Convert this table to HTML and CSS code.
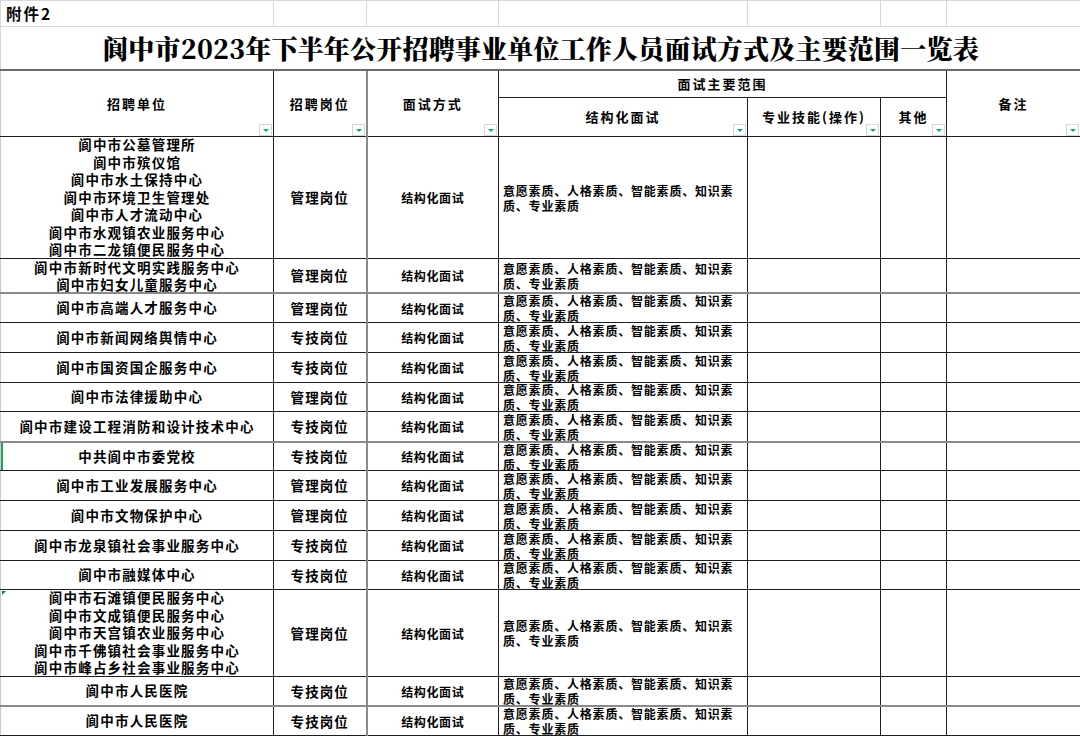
FILE: index.html
```html
<!DOCTYPE html>
<html lang="zh">
<head>
<meta charset="utf-8">
<title>面试方式及主要范围一览表</title>
<link rel="stylesheet" href="styles.css">
</head>
<body>
<table class="sheet">
  <colgroup>
    <col class="c1"><col class="c2"><col class="c3"><col class="c4"><col class="c5"><col class="c6"><col class="c7">
  </colgroup>
  <tr class="r0">
    <td class="att">附件2</td><td></td><td></td><td></td><td></td><td></td><td></td>
  </tr>
  <tr class="rt">
    <td colspan="7" class="title">阆中市2023年下半年公开招聘事业单位工作人员面试方式及主要范围一览表</td>
  </tr>
  <tr class="h1">
    <td rowspan="2" class="hd first">招聘单位<span class="f"></span></td>
    <td rowspan="2" class="hd">招聘岗位<span class="f"></span></td>
    <td rowspan="2" class="hd gl">面试方式<span class="f"></span></td>
    <td colspan="3" class="hd">面试主要范围</td>
    <td rowspan="2" class="hd">备注<span class="f"></span></td>
  </tr>
  <tr class="h2">
    <td class="hd">结构化面试<span class="f"></span></td>
    <td class="hd">专业技能(操作)<span class="f"></span></td>
    <td class="hd">其他<span class="f"></span></td>
  </tr>
  <tr class="d1">
    <td class="unit"><div class="v">阆中市公墓管理所<br>阆中市殡仪馆<br>阆中市水土保持中心<br>阆中市环境卫生管理处<br>阆中市人才流动中心<br>阆中市水观镇农业服务中心<br>阆中市二龙镇便民服务中心</div></td>
    <td class="post">管理岗位</td><td class="way gl">结构化面试</td>
    <td class="scope"><div class="v">意愿素质、人格素质、智能素质、知识素质、专业素质</div></td><td></td><td></td><td></td>
  </tr>
  <tr class="d2">
    <td class="unit"><div class="v">阆中市新时代文明实践服务中心<br>阆中市妇女儿童服务中心</div></td>
    <td class="post">管理岗位</td><td class="way gl">结构化面试</td>
    <td class="scope"><div class="v">意愿素质、人格素质、智能素质、知识素质、专业素质</div></td><td></td><td></td><td></td>
  </tr>
  <tr class="dsg gt">
    <td class="unit">阆中市高端人才服务中心</td>
    <td class="post">管理岗位</td><td class="way gl">结构化面试</td>
    <td class="scope"><div class="v">意愿素质、人格素质、智能素质、知识素质、专业素质</div></td><td></td><td></td><td></td>
  </tr>
  <tr class="ds">
    <td class="unit">阆中市新闻网络舆情中心</td>
    <td class="post">专技岗位</td><td class="way gl">结构化面试</td>
    <td class="scope"><div class="v">意愿素质、人格素质、智能素质、知识素质、专业素质</div></td><td></td><td></td><td></td>
  </tr>
  <tr class="ds">
    <td class="unit">阆中市国资国企服务中心</td>
    <td class="post">专技岗位</td><td class="way gl">结构化面试</td>
    <td class="scope"><div class="v">意愿素质、人格素质、智能素质、知识素质、专业素质</div></td><td></td><td></td><td></td>
  </tr>
  <tr class="dn">
    <td class="unit">阆中市法律援助中心</td>
    <td class="post">管理岗位</td><td class="way gl">结构化面试</td>
    <td class="scope"><div class="v">意愿素质、人格素质、智能素质、知识素质、专业素质</div></td><td></td><td></td><td></td>
  </tr>
  <tr class="ds">
    <td class="unit">阆中市建设工程消防和设计技术中心</td>
    <td class="post">专技岗位</td><td class="way gl">结构化面试</td>
    <td class="scope"><div class="v">意愿素质、人格素质、智能素质、知识素质、专业素质</div></td><td></td><td></td><td></td>
  </tr>
  <tr class="dng gt">
    <td class="unit sel">中共阆中市委党校</td>
    <td class="post">专技岗位</td><td class="way gl">结构化面试</td>
    <td class="scope"><div class="v">意愿素质、人格素质、智能素质、知识素质、专业素质</div></td><td></td><td></td><td></td>
  </tr>
  <tr class="ds">
    <td class="unit">阆中市工业发展服务中心</td>
    <td class="post">管理岗位</td><td class="way gl">结构化面试</td>
    <td class="scope"><div class="v">意愿素质、人格素质、智能素质、知识素质、专业素质</div></td><td></td><td></td><td></td>
  </tr>
  <tr class="ds">
    <td class="unit">阆中市文物保护中心</td>
    <td class="post">管理岗位</td><td class="way gl">结构化面试</td>
    <td class="scope"><div class="v">意愿素质、人格素质、智能素质、知识素质、专业素质</div></td><td></td><td></td><td></td>
  </tr>
  <tr class="ds">
    <td class="unit">阆中市龙泉镇社会事业服务中心</td>
    <td class="post">专技岗位</td><td class="way gl">结构化面试</td>
    <td class="scope"><div class="v">意愿素质、人格素质、智能素质、知识素质、专业素质</div></td><td></td><td></td><td></td>
  </tr>
  <tr class="dn">
    <td class="unit">阆中市融媒体中心</td>
    <td class="post">专技岗位</td><td class="way gl">结构化面试</td>
    <td class="scope"><div class="v">意愿素质、人格素质、智能素质、知识素质、专业素质</div></td><td></td><td></td><td></td>
  </tr>
  <tr class="d5">
    <td class="unit mark"><div class="v">阆中市石滩镇便民服务中心<br>阆中市文成镇便民服务中心<br>阆中市天宫镇农业服务中心<br>阆中市千佛镇社会事业服务中心<br>阆中市峰占乡社会事业服务中心</div></td>
    <td class="post">管理岗位</td><td class="way gl">结构化面试</td>
    <td class="scope"><div class="v">意愿素质、人格素质、智能素质、知识素质、专业素质</div></td><td></td><td></td><td></td>
  </tr>
  <tr class="dn">
    <td class="unit">阆中市人民医院</td>
    <td class="post">专技岗位</td><td class="way gl">结构化面试</td>
    <td class="scope"><div class="v">意愿素质、人格素质、智能素质、知识素质、专业素质</div></td><td></td><td></td><td></td>
  </tr>
  <tr class="dsg gt">
    <td class="unit">阆中市人民医院</td>
    <td class="post">专技岗位</td><td class="way gl">结构化面试</td>
    <td class="scope"><div class="v">意愿素质、人格素质、智能素质、知识素质、专业素质</div></td><td></td><td></td><td></td>
  </tr>
</table>
</body>
</html>
```

FILE: styles.css
```css
html, body {
  margin: 0;
  padding: 0;
  background: #ffffff;
}
body {
  width: 1080px;
  height: 736px;
  overflow: hidden;
  font-family: "Noto Sans CJK SC", "Noto Sans", sans-serif;
  color: #000000;
}
.sheet {
  border-collapse: collapse;
  table-layout: fixed;
  width: 1080px;
}
.c1 { width: 273px; }
.c2 { width: 93px; }
.c3 { width: 132px; }
.c4 { width: 249px; }
.c5 { width: 133px; }
.c6 { width: 66px; }
.c7 { width: 134px; }

.sheet td {
  padding: 0;
  border: 1px solid #1e1e1e;
  font-weight: 700;
  text-align: center;
  vertical-align: middle;
  position: relative;
  white-space: nowrap;
}
.sheet td.first,
.sheet td.unit {
  border-left: 1px solid #c3cbd9;
}

/* top sheet row with faint gridlines */
.r0 td {
  height: 25px;
  border: 1px solid #d3d8e2;
}
.r0 .att {
  text-align: left;
  padding-left: 5px;
  font-size: 15.5px;
  letter-spacing: 2px;
  line-height: 25px;
}
.rt td {
  height: 42px;
  border-left: 1px solid #d3d8e2;
  border-right: 1px solid #d3d8e2;
  border-top: 1px solid #d3d8e2;
  border-bottom: 2px solid #6a6a6a;
}
.rt .title {
  font-family: "Noto Serif CJK SC", "Liberation Serif", "Noto Sans CJK SC", serif;
  font-size: 26px;
  font-weight: 900;
  letter-spacing: 0.2px;
  line-height: 40px;
}

/* header */
.h1 td { height: 26px; }
.h2 td { height: 38px; }
.hd {
  font-size: 13px;
  letter-spacing: 2px;
  line-height: 16px;
}
.f {
  position: absolute;
  right: 1px;
  bottom: 0;
  width: 11px;
  height: 10px;
  border: 1px solid #d6d6d6;
  background: #ffffff;
}
.f::after {
  content: "";
  position: absolute;
  left: 3px;
  top: 4px;
  border-left: 3px solid transparent;
  border-right: 3px solid transparent;
  border-top: 3px solid #1fa463;
}

/* data */
.d1 td { height: 121px; }
.d2 td { height: 33px; }
.ds td { height: 29px; }
.dsg td { height: 28px; }
.dn td { height: 28px; }
.dng td { height: 27px; }
.d5 td { height: 86px; }

.v {
  margin: -4px 0;
}

.gl { border-left: 2px solid #8a8a8a !important; }
.gt td { border-top: 2px solid #8a8a8a; }

.unit {
  font-size: 13.5px;
  letter-spacing: 1.2px;
  line-height: 17.5px;
}
.d2 .unit { line-height: 17px; }
.post {
  font-size: 13.5px;
  letter-spacing: 1.1px;
  line-height: 17px;
}
.way {
  font-size: 12px;
  letter-spacing: 0.6px;
  line-height: 15px;
}
.sheet td.scope {
  font-size: 12px;
  letter-spacing: 0.8px;
  line-height: 15px;
  text-align: left;
  white-space: normal;
  padding: 0 12px 0 4px;
}
.sel::before {
  content: "";
  position: absolute;
  left: 0;
  top: 0;
  bottom: 0;
  width: 2px;
  background: #2e9e5b;
}
.mark::before {
  content: "";
  position: absolute;
  left: 1px;
  top: 1px;
  border-top: 4px solid #1e7a3c;
  border-right: 4px solid transparent;
}
```
